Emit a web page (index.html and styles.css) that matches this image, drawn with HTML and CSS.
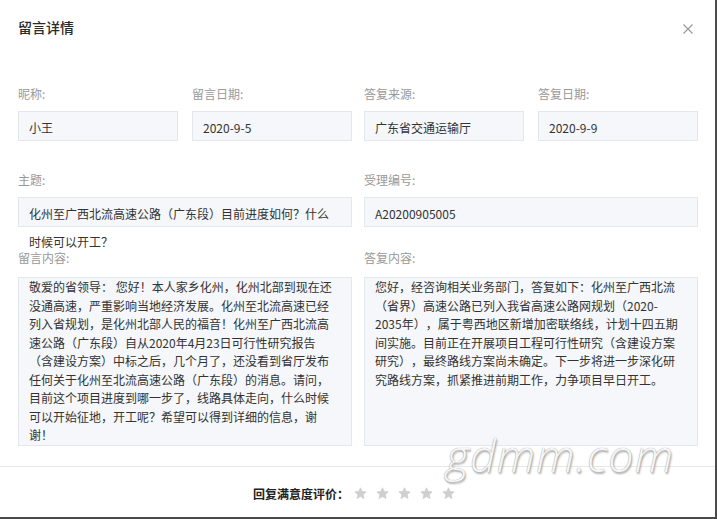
FILE: index.html
```html
<!DOCTYPE html>
<html lang="zh-CN">
<head>
  <meta charset="UTF-8" />
  <meta name="viewport" content="width=device-width, initial-scale=1.0"/>
  <title>留言详情</title>
  <link rel="stylesheet" href="styles.css">
</head>
<body>

  <div class="dialog">
    <div class="header">
      <span class="title">留言详情</span>
      <svg class="close" width="10" height="10" viewBox="0 0 10 10">
        <path d="M0.5 0.5 L9.5 9.5 M9.5 0.5 L0.5 9.5" stroke="#9a9a9a" stroke-width="1.2" fill="none"/>
      </svg>
    </div>

    <div class="form">
      <div class="row row-first">
        <div class="half">
          <div class="field">
            <div class="label">昵称:</div>
            <div class="input">小王</div>
          </div>
          <div class="field">
            <div class="label">留言日期:</div>
            <div class="input">2020-9-5</div>
          </div>
        </div>
        <div class="half">
          <div class="field">
            <div class="label">答复来源:</div>
            <div class="input">广东省交通运输厅</div>
          </div>
          <div class="field">
            <div class="label">答复日期:</div>
            <div class="input">2020-9-9</div>
          </div>
        </div>
      </div>

      <div class="row row-second">
        <div class="field">
          <div class="label">主题:</div>
          <div class="input">化州至广西北流高速公路（广东段）目前进度如何？什么时候可以开工？</div>
        </div>
        <div class="field">
          <div class="label">受理编号:</div>
          <div class="input">A20200905005</div>
        </div>
      </div>

      <div class="row row-third">
        <div class="field">
          <div class="label label-area">留言内容:</div>
          <div class="textarea">敬爱的省领导： 您好！本人家乡化州，化州北部到现在还没通高速，严重影响当地经济发展。化州至北流高速已经列入省规划，是化州北部人民的福音！化州至广西北流高速公路（广东段）自从2020年4月23日可行性研究报告（含建设方案）中标之后，几个月了，还没看到省厅发布任何关于化州至北流高速公路（广东段）的消息。请问，目前这个项目进度到哪一步了，线路具体走向，什么时候可以开始征地，开工呢？希望可以得到详细的信息，谢谢！</div>
        </div>
        <div class="field">
          <div class="label label-area">答复内容:</div>
          <div class="textarea">您好，经咨询相关业务部门，答复如下：化州至广西北流（省界）高速公路已列入我省高速公路网规划（2020-2035年），属于粤西地区新增加密联络线，计划十四五期间实施。目前正在开展项目工程可行性研究（含建设方案研究），最终路线方案尚未确定。下一步将进一步深化研究路线方案，抓紧推进前期工作，力争项目早日开工。</div>
        </div>
      </div>
    </div>

    <div class="rating">
      <span class="rating-label">回复满意度评价：</span>
      <div class="stars">
        <svg class="star" viewBox="0 0 24 24"><path d="M12 1.5 L15.1 8.2 L22.4 9 L16.9 14 L18.5 21.3 L12 17.6 L5.5 21.3 L7.1 14 L1.6 9 L8.9 8.2 Z" stroke-linejoin="round"/></svg>
        <svg class="star" viewBox="0 0 24 24"><path d="M12 1.5 L15.1 8.2 L22.4 9 L16.9 14 L18.5 21.3 L12 17.6 L5.5 21.3 L7.1 14 L1.6 9 L8.9 8.2 Z" stroke-linejoin="round"/></svg>
        <svg class="star" viewBox="0 0 24 24"><path d="M12 1.5 L15.1 8.2 L22.4 9 L16.9 14 L18.5 21.3 L12 17.6 L5.5 21.3 L7.1 14 L1.6 9 L8.9 8.2 Z" stroke-linejoin="round"/></svg>
        <svg class="star" viewBox="0 0 24 24"><path d="M12 1.5 L15.1 8.2 L22.4 9 L16.9 14 L18.5 21.3 L12 17.6 L5.5 21.3 L7.1 14 L1.6 9 L8.9 8.2 Z" stroke-linejoin="round"/></svg>
        <svg class="star" viewBox="0 0 24 24"><path d="M12 1.5 L15.1 8.2 L22.4 9 L16.9 14 L18.5 21.3 L12 17.6 L5.5 21.3 L7.1 14 L1.6 9 L8.9 8.2 Z" stroke-linejoin="round"/></svg>
      </div>
    </div>

    <div class="watermark">gdmm.com</div>
  </div>

</body>
</html>
```

FILE: styles.css
```css
* {
  box-sizing: border-box;
}

body {
  margin: 0;
  background: #fff;
  font-family: "Noto Sans CJK SC", "Microsoft YaHei", sans-serif;
  color: #333;
  text-spacing-trim: space-all;
}

.dialog {
  position: relative;
  width: 717px;
  height: 519px;
  border-right: 2px solid #4a4a4a;
  border-bottom: 2px solid #4a4a4a;
  overflow: hidden;
}

.header {
  height: 54px;
  display: flex;
  align-items: center;
  justify-content: space-between;
  padding: 0 22px 0 18px;
}

.title {
  font-size: 14px;
  font-weight: 500;
  color: #2a2a2a;
}

.close {
  margin-top: 4px;
}

.form {
  padding: 0 17px 0 18px;
}

.row {
  display: grid;
  grid-template-columns: 334px 334px;
  column-gap: 12px;
}

.row-first {
  margin-top: 32px;
}

.row-second {
  margin-top: 31px;
}

.row-third {
  margin-top: 23px;
}

.half {
  display: grid;
  grid-template-columns: 160px 160px;
  column-gap: 14px;
}

.label {
  font-size: 12px;
  line-height: 16px;
  height: 16px;
  color: #999;
  margin-bottom: 9px;
}

.label-area {
  margin-bottom: 11px;
}

.input {
  height: 30px;
  padding: 2px 16px 0 10px;
  font-size: 12px;
  line-height: 28px;
  color: #333;
  background: #f5f7fa;
  border: 1px solid #e4e7ed;
}

.textarea {
  height: 169px;
  padding: 0 16px 0 10px;
  font-size: 12px;
  line-height: 18.5px;
  color: #333;
  background: #f5f7fa;
  border: 1px solid #e4e7ed;
  overflow: hidden;
}

.rating {
  margin-top: 20px;
  border-top: 1px solid #e8e8e8;
  height: 50px;
  padding: 4px 0 0 253px;
  display: flex;
  align-items: center;
}

.rating-label {
  font-size: 12px;
  font-weight: bold;
  color: #222;
}

.stars {
  display: flex;
  gap: 9px;
  margin-left: 5px;
}

.star {
  width: 13px;
  height: 13px;
  fill: #cfcfcf;
  stroke: #cfcfcf;
  stroke-width: 1.5;
}

.watermark {
  position: absolute;
  left: 446px;
  top: 424px;
  font-family: "Open Sans", sans-serif;
  font-style: italic;
  font-weight: 300;
  font-size: 45px;
  letter-spacing: 1px;
  color: #f6f6f6;
  text-shadow: 0 0 1px #888, 1px 2px 2px #aaa;
}
```
